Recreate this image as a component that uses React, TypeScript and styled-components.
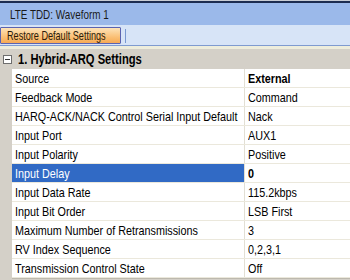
import React from 'react';
import styled, { createGlobalStyle } from 'styled-components';

const GlobalStyle = createGlobalStyle`
  html, body {
    margin: 0;
    padding: 0;
    background: #d4d0c8;
  }
  body {
    font-family: "Liberation Sans", Arial, sans-serif;
    font-size: 13px;
    color: #000;
  }
`;

// the original UI uses a narrow face; squeeze Liberation Sans to the same width
const Txt = styled.span<{ $squeeze?: number }>`
  display: inline-block;
  white-space: nowrap;
  transform: scaleX(${({ $squeeze }) => $squeeze ?? 0.83});
  transform-origin: left center;
`;

const Window = styled.div`
  width: 350px;
  height: 280px;
  overflow: hidden;
  background: #d4d0c8;
  border-top: 1px solid #c8ccd4;
`;

const TitleBar = styled.div`
  height: 22px;
  display: flex;
  align-items: center;
  padding-left: 10px;
  background: #9bb9ea;
  border-top: 2px solid #1c2c50;
  color: #1a1a1a;
  font-size: 13px;
`;

const Toolbar = styled.div`
  height: 19px;
  display: flex;
  align-items: center;
  background: #d7e4f7;
  border-bottom: 1px solid #7f9bd0;
  padding-top: 1px;
`;

const ToolButton = styled.button`
  box-sizing: border-box;
  width: 121px;
  height: 17px;
  margin: 0;
  padding: 0 0 0 6px;
  display: flex;
  align-items: center;
  font-family: inherit;
  font-size: 13px;
  color: #2a1a0a;
  background: linear-gradient(#fde3b8, #fabd70 65%, #f6aa55);
  border: 1px solid #5b63b0;
  border-radius: 1px;
`;

const Separator = styled.div`
  width: 1px;
  height: 14px;
  margin-left: 4px;
  background: #7a98d0;
`;

const Cream = styled.div`
  height: 3px;
  background: #eeeddc;
`;

const SectionHeader = styled.div`
  height: 20px;
  display: flex;
  align-items: center;
  font-weight: bold;
  font-size: 14px;
`;

const Toggle = styled.div`
  width: 7px;
  height: 7px;
  margin: 0 6px 0 3px;
  border: 1px solid #6e6e6e;
  background: #fff;
  position: relative;
  &::after {
    content: '';
    position: absolute;
    left: 1px;
    right: 1px;
    top: 3px;
    height: 1px;
    background: #333;
  }
`;

const Grid = styled.div`
  margin-left: 12px;
  background: #fff;
  border-bottom: 1px solid #bdb9ae;
`;

const Row = styled.div`
  display: grid;
  grid-template-columns: 233px 1fr;
  height: 18px;
  border-bottom: 1px solid #ebe8dc;
`;

const Label = styled.div<{ $selected?: boolean }>`
  display: flex;
  align-items: center;
  padding-left: 3px;
  border-right: 1px solid #e2dfd4;
  overflow: hidden;
  background: ${({ $selected }) => ($selected ? '#316ac5' : '#fff')};
  color: ${({ $selected }) => ($selected ? '#fff' : '#000')};
`;

const Value = styled.div<{ $bold?: boolean }>`
  display: flex;
  align-items: center;
  padding-left: 3px;
  font-weight: ${({ $bold }) => ($bold ? 'bold' : 'normal')};
`;

const rows: { label: string; value: string; bold?: boolean; selected?: boolean }[] = [
  { label: 'Source', value: 'External', bold: true },
  { label: 'Feedback Mode', value: 'Command' },
  { label: 'HARQ-ACK/NACK Control Serial Input Default', value: 'Nack' },
  { label: 'Input Port', value: 'AUX1' },
  { label: 'Input Polarity', value: 'Positive' },
  { label: 'Input Delay', value: '0', bold: true, selected: true },
  { label: 'Input Data Rate', value: '115.2kbps' },
  { label: 'Input Bit Order', value: 'LSB First' },
  { label: 'Maximum Number of Retransmissions', value: '3' },
  { label: 'RV Index Sequence', value: '0,2,3,1' },
  { label: 'Transmission Control State', value: 'Off' },
];

const App: React.FC = () => (
  <>
    <GlobalStyle />
    <Window>
      <TitleBar>
        <Txt $squeeze={0.76}>LTE TDD: Waveform 1</Txt>
      </TitleBar>
      <Toolbar>
        <ToolButton>
          <Txt $squeeze={0.7}>Restore Default Settings</Txt>
        </ToolButton>
        <Separator />
      </Toolbar>
      <Cream />
      <SectionHeader>
        <Toggle />
        <Txt $squeeze={0.8}>1. Hybrid-ARQ Settings</Txt>
      </SectionHeader>
      <Grid>
        {rows.map((r) => (
          <Row key={r.label}>
            <Label $selected={r.selected}>
              <Txt>{r.label}</Txt>
            </Label>
            <Value $bold={r.bold}>
              <Txt>{r.value}</Txt>
            </Value>
          </Row>
        ))}
      </Grid>
    </Window>
  </>
);

export default App;
